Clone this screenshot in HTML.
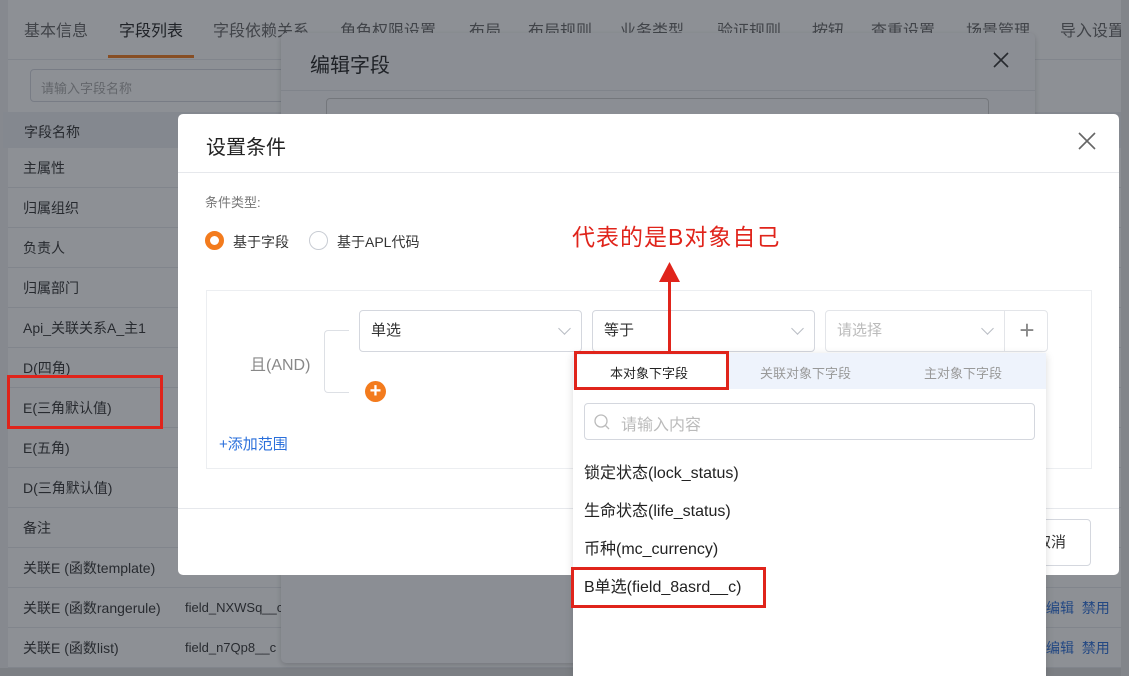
<!DOCTYPE html>
<html><head><meta charset="utf-8"><style>
*{margin:0;padding:0;box-sizing:border-box}
body{width:1129px;height:676px;overflow:hidden;position:relative;background:#fff;font-family:"Liberation Sans","Noto Sans CJK SC",sans-serif;color:#333}
.a{position:absolute;white-space:nowrap}
.tab{position:absolute;top:17px;font-size:16px;color:#666}
.row{position:absolute;left:8px;width:1113px;height:40px;border-bottom:1px solid #e6e8ec;font-size:14px;color:#333;padding-left:15px;line-height:40px;white-space:nowrap;overflow:hidden}
.ov{position:absolute;left:0;top:0;width:1129px;height:676px;background:rgba(28,33,44,0.5)}
.sel{position:absolute;height:42px;border:1px solid #d4d7de;border-radius:4px;font-size:15px;line-height:40px;padding-left:11px;color:#333;background:#fff}
.chev{position:absolute;right:12px;top:13px;width:9px;height:9px;border-right:1.3px solid #b8bcc4;border-bottom:1.3px solid #b8bcc4;transform:rotate(45deg)}
.it{position:absolute;left:11px;font-size:16px;color:#222;white-space:nowrap}
.red{border:3px solid #e0241b;position:absolute}
</style></head><body>
<div class="a" style="left:0;top:0;width:8px;height:676px;background:#f0f1f3"></div>
<div class="tab" style="left:24px">基本信息</div>
<div class="tab" style="left:119px;color:#222">字段列表</div>
<div class="a" style="left:108px;top:55px;width:86px;height:3px;background:#f37b1d"></div>
<div class="tab" style="left:213px">字段依赖关系</div>
<div class="tab" style="left:340px">角色权限设置</div>
<div class="tab" style="left:469px">布局</div>
<div class="tab" style="left:528px">布局规则</div>
<div class="tab" style="left:620px">业务类型</div>
<div class="tab" style="left:717px">验证规则</div>
<div class="tab" style="left:812px">按钮</div>
<div class="tab" style="left:871px">查重设置</div>
<div class="tab" style="left:966px">场景管理</div>
<div class="tab" style="left:1060px">导入设置</div>
<div class="a" style="left:8px;top:59px;width:1113px;height:1px;background:#e6e8ec"></div>
<div class="a" style="left:30px;top:69px;width:300px;height:33px;border:1px solid #d4d7de;border-radius:4px;font-size:13px;color:#aaa;padding:8px 10px">请输入字段名称</div>
<div class="a" style="left:3px;top:112px;width:1118px;height:36px;background:#eceef2"></div>
<div class="a" style="left:24px;top:122px;font-size:14px">字段名称</div>
<div class="row" style="top:148px">主属性</div>
<div class="row" style="top:188px">归属组织</div>
<div class="row" style="top:228px">负责人</div>
<div class="row" style="top:268px">归属部门</div>
<div class="row" style="top:308px">Api_关联关系A_主1</div>
<div class="row" style="top:348px">D(四角)</div>
<div class="row" style="top:388px">E(三角默认值)</div>
<div class="row" style="top:428px">E(五角)</div>
<div class="row" style="top:468px">D(三角默认值)</div>
<div class="row" style="top:508px">备注</div>
<div class="row" style="top:548px">关联E (函数template)</div>
<div class="row" style="top:588px">关联E (函数rangerule)<span class="a" style="left:177px;font-size:13px">field_NXWSq__c</span><span class="a" style="left:1038px;color:#2a6fdb">编辑&nbsp;&nbsp;禁用</span></div>
<div class="row" style="top:628px">关联E (函数list)<span class="a" style="left:177px;font-size:13px">field_n7Qp8__c</span><span class="a" style="left:1038px;color:#2a6fdb">编辑&nbsp;&nbsp;禁用</span></div>
<div class="a" style="left:0;top:668px;width:1129px;height:8px;background:#ddd"></div>
<div class="a" style="left:281px;top:33px;width:754px;height:630px;background:#fbfbfc;border-radius:5px;box-shadow:0 2px 6px rgba(0,0,0,.2)">
 <div class="a" style="left:29px;top:16px;font-size:20px;color:#222">编辑字段</div>
 <svg class="a" style="left:712px;top:19px" width="16" height="16"><path d="M1 1L15 15M15 1L1 15" stroke="#333" stroke-width="1.6"/></svg>
 <div class="a" style="left:0;top:57px;width:754px;height:1px;background:#e4e6ea"></div>
 <div class="a" style="left:45px;top:65px;width:663px;height:40px;border:1px solid #ccc;border-radius:4px"></div>
</div>
<div class="a" style="left:1121px;top:0;width:8px;height:676px;background:#e8e8e8"></div>
<div class="ov"></div>
<div class="a" style="left:178px;top:114px;width:941px;height:461px;background:#fff;border-radius:5px">
 <div class="a" style="left:28px;top:17px;font-size:20px;color:#222">设置条件</div>
 <svg class="a" style="left:900px;top:18px" width="18" height="18"><path d="M1 1L17 17M17 1L1 17" stroke="#666" stroke-width="1.6"/></svg>
 <div class="a" style="left:0;top:58px;width:941px;height:1px;background:#e6e8ec"></div>
 <div class="a" style="left:27px;top:78px;font-size:13px;color:#777">条件类型:</div>
 <div class="a" style="left:27px;top:117px;width:19px;height:19px;border:5px solid #f37b1d;border-radius:50%"></div>
 <div class="a" style="left:55px;top:118px;font-size:14px;color:#333">基于字段</div>
 <div class="a" style="left:131px;top:117px;width:19px;height:19px;border:1px solid #c8ccd3;border-radius:50%"></div>
 <div class="a" style="left:159px;top:118px;font-size:14px;color:#333">基于APL代码</div>
 <div class="a" style="left:28px;top:176px;width:886px;height:179px;border:1px solid #eceef1"></div>
 <div class="a" style="left:72px;top:237px;font-size:16px;color:#888">且(AND)</div>
 <div class="a" style="left:146px;top:216px;width:25px;height:63px;border:1px solid #dde0e5;border-right:none;border-radius:4px 0 0 4px"></div>
 <div class="a" style="left:187px;top:267px;width:21px;height:21px;border-radius:50%;background:#f37b1d;color:#fff;font-size:20px;font-weight:bold;line-height:20px;text-align:center">+</div>
 <div class="a" style="left:41px;top:319px;font-size:15px;color:#2a6fdb">+添加范围</div>
 <div class="a" style="left:0;top:394px;width:941px;height:1px;background:#e6e8ec"></div>
 <div class="a" style="left:832px;top:405px;width:81px;height:47px;border:1px solid #d4d7de;border-radius:4px;font-size:15px;line-height:45px;padding-left:25px">取消</div>
</div>
<div class="sel" style="left:359px;top:310px;width:223px">单选<i class="chev"></i></div>
<div class="sel" style="left:592px;top:310px;width:223px">等于<i class="chev"></i></div>
<div class="sel" style="left:825px;top:310px;width:223px;color:#bbb;border-color:#e3e5e9">请选择<i class="chev" style="right:55px"></i><div class="a" style="left:178px;top:0;width:1px;height:40px;background:#e3e5e9"></div><div class="a" style="left:180px;top:0;width:42px;text-align:center;font-size:26px;color:#888;line-height:38px">+</div></div>
<div class="a" style="left:573px;top:353px;width:473px;height:323px;background:#fff;box-shadow:0 2px 8px rgba(0,0,0,.15)">
 <div class="a" style="left:0;top:0;width:473px;height:36px;background:#eef3fc"></div>
 <div class="a" style="left:3px;top:2px;width:150px;height:34px;background:#fff"></div>
 <div class="a" style="left:37px;top:10px;font-size:13px;color:#222">本对象下字段</div>
 <div class="a" style="left:187px;top:10px;font-size:13px;color:#999">关联对象下字段</div>
 <div class="a" style="left:351px;top:10px;font-size:13px;color:#999">主对象下字段</div>
 <div class="a" style="left:11px;top:50px;width:451px;height:37px;border:1px solid #d4d7de;border-radius:4px"></div>
 <svg class="a" style="left:21px;top:61px" width="16" height="16"><circle cx="7" cy="7" r="6" stroke="#bbb" stroke-width="1.3" fill="none"/><path d="M11.5 11.5L15 15" stroke="#bbb" stroke-width="1.3"/></svg>
 <div class="a" style="left:48px;top:58px;font-size:16px;color:#bbb">请输入内容</div>
 <div class="it" style="top:106px">锁定状态(lock_status)</div>
 <div class="it" style="top:144px">生命状态(life_status)</div>
 <div class="it" style="top:182px">币种(mc_currency)</div>
 <div class="it" style="top:220px">B单选(field_8asrd__c)</div>
</div>
<div class="red" style="left:7px;top:375px;width:156px;height:54px"></div>
<div class="red" style="left:574px;top:351px;width:155px;height:39px"></div>
<div class="red" style="left:571px;top:567px;width:195px;height:41px"></div>
<div class="a" style="left:668px;top:278px;width:3px;height:74px;background:#e0241b"></div>
<svg class="a" style="left:659px;top:262px" width="21" height="20"><path d="M10.5 0L21 20H0Z" fill="#e0241b"/></svg>
<div class="a" style="left:572px;top:218px;font-size:23px;color:#e0241b;letter-spacing:1px">代表的是B对象自己</div>
</body></html>
